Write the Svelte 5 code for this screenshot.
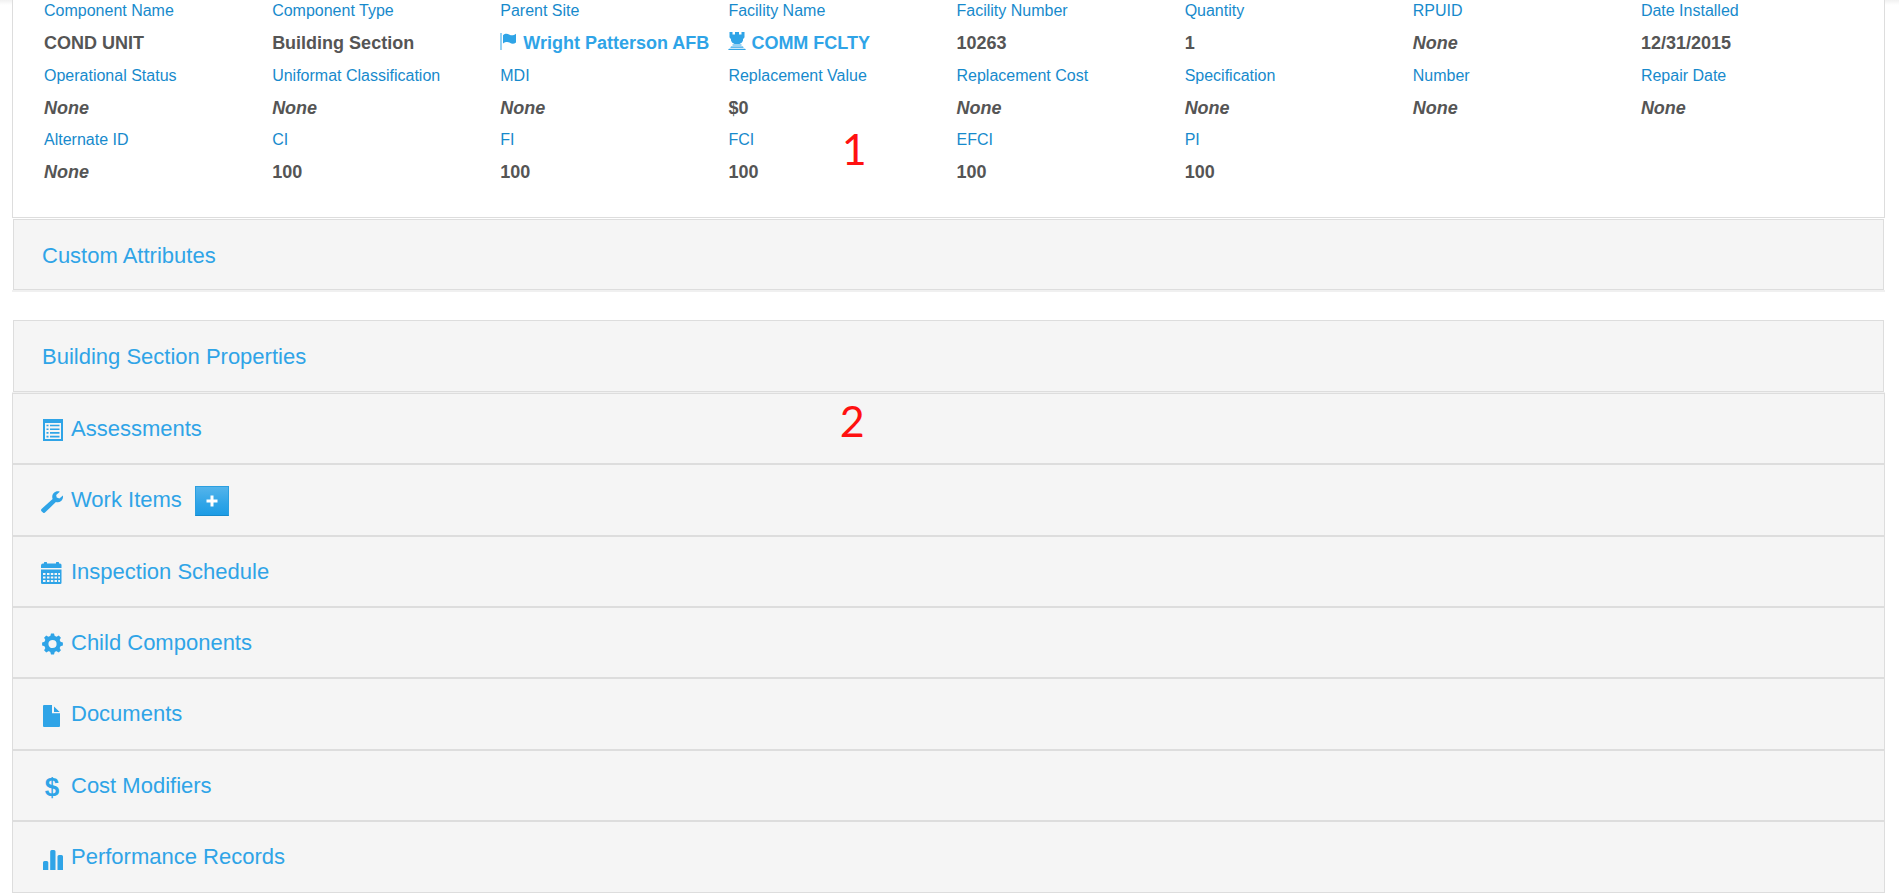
<script>
  const fields = [
    { label: 'Component Name', value: 'COND UNIT' },
    { label: 'Component Type', value: 'Building Section' },
    { label: 'Parent Site', value: 'Wright Patterson AFB', icon: 'flag' },
    { label: 'Facility Name', value: 'COMM FCLTY', icon: 'tower' },
    { label: 'Facility Number', value: '10263' },
    { label: 'Quantity', value: '1' },
    { label: 'RPUID' },
    { label: 'Date Installed', value: '12/31/2015' },
    { label: 'Operational Status' },
    { label: 'Uniformat Classification' },
    { label: 'MDI' },
    { label: 'Replacement Value', value: '$0' },
    { label: 'Replacement Cost' },
    { label: 'Specification' },
    { label: 'Number' },
    { label: 'Repair Date' },
    { label: 'Alternate ID' },
    { label: 'CI', value: '100' },
    { label: 'FI', value: '100' },
    { label: 'FCI', value: '100' },
    { label: 'EFCI', value: '100' },
    { label: 'PI', value: '100' }
  ];

  const sections = [
    { id: 'assessments', title: 'Assessments', icon: 'list' },
    { id: 'work-items', title: 'Work Items', icon: 'wrench', add: true },
    { id: 'inspection-schedule', title: 'Inspection Schedule', icon: 'calendar' },
    { id: 'child-components', title: 'Child Components', icon: 'cog' },
    { id: 'documents', title: 'Documents', icon: 'file' },
    { id: 'cost-modifiers', title: 'Cost Modifiers', icon: 'usd' },
    { id: 'performance-records', title: 'Performance Records', icon: 'stats' }
  ];

  const teeth = [0, 45, 90, 135, 180, 225, 270, 315];
</script>

{#snippet glyph(name)}
  {#if name === 'usd'}
    <span class="icon usd" aria-hidden="true">$</span>
  {:else}
    <svg class="icon" viewBox="0 0 22 22" aria-hidden="true">
      {#if name === 'list'}
        <path fill-rule="evenodd" d="M2 0h20v22H2zM4 4v16h16V4z" />
        <path d="M5.5 5.7h2v1.6h-2zM9 5.7h9.5v1.6H9zM5.5 9.4h2V11h-2zM9 9.4h9.5V11H9zM5.5 13.1h2v1.6h-2zM9 13.1h9.5v1.6H9zM5.5 16.8h2v1.6h-2zM9 16.8h9.5v1.6H9z" />
      {:else if name === 'wrench'}
        <path d="M18.8.7 15.2 4.1l.5 2.5 2.700.8 3.500-2.800c.4 2-.2 4.200-1.800 5.500-1.500 1.300-3.500 1.500-5.200.9L4 21.600c-.6.600-1.500.600-2.100 0L.5 20.200c-.6-.6-.6-1.500 0-2.100L11.600 7.900c-.8-2-.3-4.300 1.200-5.900C14.400.4 16.700-.2 18.800.7z" />
      {:else if name === 'calendar'}
        <path d="M2 1.500h1V.6Q3 0 3.600 0h1.800Q6 0 6 .6v.9h9V.6q0-.6.6-.6h1.800q.6 0 .6.600v.9h1q1.500 0 1.500 1.500V6H0V3.500q0-2 2-2z" />
        <path fill-rule="evenodd" d="M0 7.500h20.500v13.300q0 1.200-1.200 1.200H1.200Q0 22 0 20.800zM2 11v2h2.500v-2zM6 11v2h2.500v-2zM9.800 11v2h2.500v-2zM13.500 11v2H16v-2zM17.200 11v2H19v-2zM2 14.500v2h2.500v-2zM6 14.500v2h2.500v-2zM9.800 14.500v2h2.500v-2zM13.500 14.500v2H16v-2zM17.200 14.500v2H19v-2zM2 18v2h2.500v-2zM6 18v2h2.500v-2zM9.800 18v2h2.500v-2zM13.500 18v2H16v-2zM17.200 18v2H19v-2z" />
      {:else if name === 'cog'}
        <circle cx="11.5" cy="11" r="6.200" fill="none" stroke="currentColor" stroke-width="4.200" />
        {#each teeth as angle}
          <path transform={`rotate(${angle} 11.5 11)`} d="M9 4 10 .6h3L14 4z" />
        {/each}
      {:else if name === 'file'}
        <path d="M2 1q0-1 1-1h8v8.300h8V21q0 1-1 1H3q-1 0-1-1z" />
        <path d="M13 1.500 18.700 7H13z" />
      {:else if name === 'stats'}
        <path d="M2 14.500q0-1.500 1.500-1.500h2.300q1.500 0 1.500 1.500V22H2zM9.200 3.500Q9.200 2 10.700 2H13q1.500 0 1.500 1.500V22H9.200zM16.500 8.500Q16.500 7 18 7h2.500Q22 7 22 8.500V22h-5.500z" />
      {/if}
    </svg>
  {/if}
{/snippet}

<div class="topbar-shade"></div>
<main>
  <section class="details">
    <dl>
      {#each fields as field}
        <div class="field">
          <dt>{field.label}</dt>
          <dd class:none={!field.value}>
            {#if field.icon}
              <a href="#{field.icon}">
                <svg class="small" viewBox="0 0 18 18" aria-hidden="true">
                  {#if field.icon === 'flag'}
                    <path d="M.5 1h1v17h-1z" />
                    <path d="M3 3.200c2.500-2.300 4.500-1.600 6.500-.5 2 1 4 1 6.500-.9v8.700c-2.500 1.700-4.200 1.300-6.200.2-2-1-4.300-1-6.800.8z" />
                  {:else}
                    <path d="M1.500 0h3v2.500H7V0h4v2.500h2.500V0h3v5q0 1-1.500 2v1.500q-.3 2-3.500 3.500h-5Q3.300 10.500 3 8.500V7Q1.500 6 1.500 5z" />
                    <path d="M4.500 12.600h9v1h-9zM3 14.600h12l.7 1.200H2.300zM1 16.700h16l1 1.300H0z" />
                  {/if}
                </svg>
                {field.value}
              </a>
            {:else}
              {field.value ?? 'None'}
            {/if}
          </dd>
        </div>
      {/each}
    </dl>
  </section>

  <section class="group custom">
    <h4 class="bar"><a href="#custom-attributes">Custom Attributes</a></h4>
  </section>

  <section class="group properties">
    <h4 class="bar"><a href="#building-section">Building Section Properties</a></h4>
  </section>

  {#each sections as section}
    <h4 class="bar">
      <a href="#{section.id}">{@render glyph(section.icon)}{section.title}</a>
      {#if section.add}
        <button type="button" aria-label="Add work item">
          <svg viewBox="0 0 12 12" aria-hidden="true"><path d="M4.500.5h3v4h4v3h-4v4h-3v-4h-4v-3h4z" /></svg>
        </button>
      {/if}
    </h4>
  {/each}

  <span class="callout first">1</span>
  <span class="callout second">2</span>
</main>

<style>
  :global(body) {
    background: #fff;
    font-family: "Liberation Sans", Arial, sans-serif;
    color: #555;
  }
  .topbar-shade {
    position: absolute;
    top: 0;
    left: 0;
    right: 0;
    height: 5px;
    background: linear-gradient(#f1f1f1, #fff);
  }
  main {
    position: relative;
    margin: 0 14px 0 12px;
  }
  .details {
    border: 1px solid #ddd;
    border-top: 0;
    background: #fff;
    padding: 0 15px 23px 31px;
    margin-bottom: 1px;
  }
  dl {
    display: grid;
    grid-template-columns: repeat(8, minmax(0, 1fr));
    margin: 0;
  }
  .field {
    padding-bottom: 6px;
    white-space: nowrap;
  }
  dt {
    font-size: 16px;
    line-height: 22px;
    margin-bottom: 6px;
    color: #178acc;
  }
  dd {
    margin: 0;
    font-size: 18px;
    line-height: 1.7;
    font-weight: bold;
  }
  .none {
    font-style: italic;
  }
  a {
    color: #2fa4e7;
    text-decoration: none;
  }
  svg {
    fill: currentColor;
  }
  .small {
    width: 18px;
    height: 18px;
    vertical-align: -1px;
  }
  .group {
    padding: 0 1px;
  }
  .custom {
    border-bottom: 2px solid #f0f0f0;
    margin-bottom: 28px;
  }
  .properties {
    border-bottom: 1px solid #f0f0f0;
  }
  .bar {
    display: flex;
    align-items: flex-end;
    gap: 13px;
    margin: 0;
    padding: 22px 28px 21px;
    border: 1px solid #ddd;
    background: #f5f5f5;
    font-size: 22px;
    font-weight: normal;
    line-height: 1.2;
  }
  .group .bar {
    padding-bottom: 20px;
    line-height: 1.25;
  }
  .bar a {
    display: flex;
    align-items: flex-end;
    gap: 8px;
  }
  .icon {
    flex: none;
    width: 22px;
    height: 22px;
    margin-bottom: 1px;
  }
  .usd {
    font-size: 26px;
    font-weight: bold;
    line-height: 22px;
    text-align: center;
  }
  button {
    display: flex;
    align-items: center;
    justify-content: center;
    align-self: flex-start;
    width: 34px;
    height: 30px;
    margin: -1px 0 -4px;
    padding: 0;
    border: 1px solid #2b9fe0;
    border-bottom-color: #178acc;
    background: linear-gradient(#54b4eb, #2fa4e7 60%, #1d9ce5);
    color: #fff;
  }
  button svg {
    width: 12px;
    height: 12px;
  }
  .callout {
    position: absolute;
    font-family: Lato, sans-serif;
    font-size: 43px;
    line-height: 48px;
    color: #f11;
  }
  .first {
    top: 125px;
    left: 44.300%;
  }
  .second {
    top: 397px;
    left: 44.200%;
  }
</style>
